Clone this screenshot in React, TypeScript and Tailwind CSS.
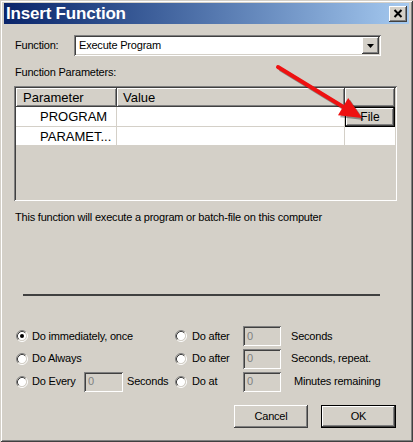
import React from "react";

const raised =
  "shadow-[inset_-1px_-1px_#404040,inset_1px_1px_#ffffff,inset_-2px_-2px_#808080,inset_2px_2px_#d4d0c8]";
const sunken =
  "shadow-[inset_1px_1px_#808080,inset_-1px_-1px_#ffffff,inset_2px_2px_#404040,inset_-2px_-2px_#d4d0c8]";

function Radio({ checked = false }: { checked?: boolean }) {
  return (
    <svg width="12" height="12" viewBox="0 0 12 12" className="shrink-0">
      <circle cx="6" cy="6" r="4.2" fill="#ffffff" />
      <path d="M2.11 9.89 A5.5 5.5 0 0 1 9.89 2.11" stroke="#808080" strokeWidth="1" fill="none" />
      <path d="M9.89 2.11 A5.5 5.5 0 0 1 2.11 9.89" stroke="#ffffff" strokeWidth="1" fill="none" />
      <path d="M2.82 9.18 A4.5 4.5 0 0 1 9.18 2.82" stroke="#404040" strokeWidth="1" fill="none" />
      <path d="M9.18 2.82 A4.5 4.5 0 0 1 2.82 9.18" stroke="#d4d0c8" strokeWidth="1" fill="none" />
      {checked && <circle cx="6" cy="6" r="2" fill="#000000" />}
    </svg>
  );
}

function Field({ w }: { w: string }) {
  return (
    <div className={`${w} h-[20px] shrink-0 ${sunken} bg-[#d4d0c8] flex items-center pl-[4px] text-[#808080]`}>0</div>
  );
}

export default function App() {
  return (
    <div className="relative w-[413px] h-[442px] bg-[#d4d0c8] font-['Liberation_Sans',Arial,sans-serif] text-[11px] leading-[13px] tracking-[-0.2px] text-black shadow-[inset_1px_1px_#d4d0c8,inset_-1px_-1px_#404040,inset_2px_2px_#ffffff,inset_-2px_-2px_#808080] p-[4px] pt-[3px] flex flex-col overflow-hidden">
      {/* Title bar */}
      <div className="h-[21px] bg-linear-to-r from-[#0a246a] to-[#a6caf0] flex items-center justify-between pl-[2px] pr-[2px]">
        <span className="text-white font-bold text-[17px] leading-[21px] tracking-[-0.2px]">Insert Function</span>
        <div className={`w-[18px] h-[16px] bg-[#d4d0c8] ${raised} flex items-center justify-center`}>
          <svg width="10" height="9" viewBox="0 0 10 9">
            <path d="M1.5 1 L8.5 8 M8.5 1 L1.5 8" stroke="#000" strokeWidth="2" />
          </svg>
        </div>
      </div>

      {/* Function row */}
      <div className="mt-[11px] flex items-center h-[21px]">
        <span className="ml-[11px] w-[59px]">Function:</span>
        <div className={`w-[307px] h-[21px] bg-white ${sunken} flex items-center justify-between p-[2px]`}>
          <span className="pl-[3px]">Execute Program</span>
          <div className={`w-[17px] h-[17px] bg-[#d4d0c8] ${raised} flex items-center justify-center`}>
            <svg width="7" height="4" viewBox="0 0 7 4">
              <path d="M0 0 H7 L3.5 4 Z" fill="#000" />
            </svg>
          </div>
        </div>
      </div>

      <div className="mt-[10px] ml-[11px]">Function Parameters:</div>

      {/* Table */}
      <div className={`mt-[7px] ml-[10px] w-[383px] h-[115px] ${sunken} p-[2px] bg-[#d4d0c8] tracking-normal`}>
        <div className="flex h-[19px] text-[13px]">
          <div className={`w-[101px] ${raised} flex items-center pl-[7px]`}>Parameter</div>
          <div className={`w-[228px] ${raised} flex items-center pl-[6px]`}>Value</div>
          <div className={`w-[50px] ${raised}`} />
        </div>
        <div className="flex h-[20px] bg-white border-b border-[#d4d0c8] text-[13px]">
          <div className="w-[101px] border-r border-[#d4d0c8] flex items-center pl-[24px]">PROGRAM</div>
          <div className="w-[228px] border-r border-[#d4d0c8]" />
          <div className="w-[50px] h-[20px] border border-black bg-[#d4d0c8] flex">
            <div className={`flex-1 ${raised} flex items-center justify-center text-[12px]`}>File</div>
          </div>
        </div>
        <div className="flex h-[19px] bg-white border-b border-[#d4d0c8] text-[13px]">
          <div className="w-[101px] border-r border-[#d4d0c8] flex items-center pl-[24px]">PARAMET...</div>
          <div className="w-[228px] border-r border-[#d4d0c8]" />
          <div className="w-[50px]" />
        </div>
      </div>

      <div className="mt-[10px] ml-[11px]">This function will execute a program or batch-file on this computer</div>

      <div className="mt-[70px] ml-[19px] w-[357px] h-[2px] bg-[#404040]" />

      {/* Options */}
      <div className="mt-[29px] flex flex-col">
        <div className="flex items-center h-[22px]">
          <div className="w-[171px] flex items-center pl-[12px] gap-[4px]">
            <Radio checked />
            <span>Do immediately, once</span>
          </div>
          <div className="flex items-center gap-[5px]">
            <Radio />
            <span className="w-[51px]">Do after</span>
          </div>
          <Field w="w-[38px]" />
          <span className="ml-[10px]">Seconds</span>
        </div>
        <div className="flex items-center h-[23px]">
          <div className="w-[171px] flex items-center pl-[12px] gap-[4px]">
            <Radio />
            <span>Do Always</span>
          </div>
          <div className="flex items-center gap-[5px]">
            <Radio />
            <span className="w-[51px]">Do after</span>
          </div>
          <Field w="w-[38px]" />
          <span className="ml-[10px]">Seconds, repeat.</span>
        </div>
        <div className="flex items-center h-[23px]">
          <div className="w-[171px] flex items-center pl-[12px] gap-[4px]">
            <Radio />
            <span className="w-[48px]">Do Every</span>
            <Field w="w-[39px]" />
            <span>Seconds</span>
          </div>
          <div className="flex items-center gap-[5px]">
            <Radio />
            <span className="w-[51px]">Do at</span>
          </div>
          <Field w="w-[38px]" />
          <span className="ml-[13px]">Minutes remaining</span>
        </div>
      </div>

      {/* Buttons */}
      <div className="mt-[12px] flex">
        <div className={`ml-[230px] w-[74px] h-[23px] bg-[#d4d0c8] ${raised} flex items-center justify-center`}>
          Cancel
        </div>
        <div className="ml-[13px] w-[75px] h-[23px] border border-black bg-[#d4d0c8] flex">
          <div className={`flex-1 ${raised} flex items-center justify-center`}>OK</div>
        </div>
      </div>

      {/* Red annotation arrow */}
      <svg className="absolute left-0 top-0 pointer-events-none" width="413" height="442" viewBox="0 0 413 442">
        <g opacity="0.35" transform="translate(2 2)">
          <path d="M278 67 L343 106.7" stroke="#000" strokeWidth="4" />
          <path d="M362 118 L338 115.3 L348.2 98.1 Z" fill="#000" />
        </g>
        <path d="M278 67 L343 106.7" stroke="#ee1111" strokeWidth="4" strokeLinecap="round" />
        <path d="M362 118 L338 115.3 L348.2 98.1 Z" fill="#ee1111" />
      </svg>
    </div>
  );
}
